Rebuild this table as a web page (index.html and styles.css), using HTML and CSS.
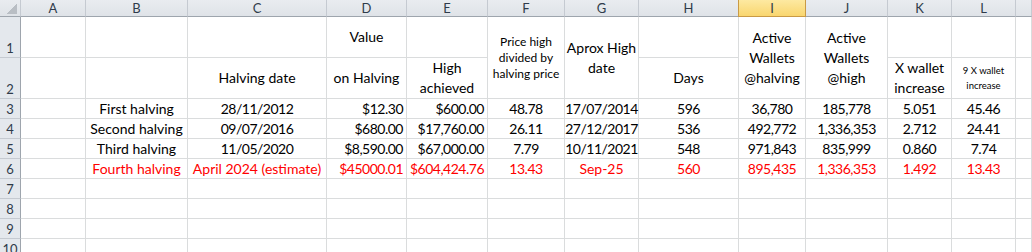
FILE: index.html
```html
<!DOCTYPE html>
<html lang="en">
<head>
<meta charset="utf-8">
<title>Bitcoin halving sheet</title>
<link rel="stylesheet" href="styles.css">
</head>
<body>
<div class="sheet">
  <div class="ch corner"></div>
  <div class="ch">A</div>
  <div class="ch">B</div>
  <div class="ch">C</div>
  <div class="ch">D</div>
  <div class="ch">E</div>
  <div class="ch">F</div>
  <div class="ch">G</div>
  <div class="ch">H</div>
  <div class="ch sel">I</div>
  <div class="ch">J</div>
  <div class="ch">K</div>
  <div class="ch">L</div>
  <div class="ch"></div>

  <div class="rh">1</div>
  <div class="c"></div>
  <div class="c"></div>
  <div class="c"></div>
  <div class="c ctr">Value</div>
  <div class="c"></div>
  <div class="c ctr span2 small">Price high<br>divided by<br>halving price</div>
  <div class="c ctr span2">Aprox High<br>date</div>
  <div class="c"></div>
  <div class="c ctr span2">Active<br>Wallets<br>@halving</div>
  <div class="c ctr span2">Active<br>Wallets<br>@high</div>
  <div class="c"></div>
  <div class="c"></div>
  <div class="c"></div>

  <div class="rh">2</div>
  <div class="c"></div>
  <div class="c"></div>
  <div class="c ctr">Halving date</div>
  <div class="c ctr">on Halving</div>
  <div class="c ctr">High<br>achieved</div>
  <div class="c ctr">Days</div>
  <div class="c ctr">X wallet<br>increase</div>
  <div class="c ctr tiny">9 X wallet<br>increase</div>
  <div class="c"></div>

  <div class="rh">3</div>
  <div class="c"></div>
  <div class="c ctr">First halving</div>
  <div class="c ctr num">28/11/2012</div>
  <div class="c rt num">$12.30</div>
  <div class="c rt num">$600.00</div>
  <div class="c ctr num">48.78</div>
  <div class="c ctr num">17/07/2014</div>
  <div class="c ctr num">596</div>
  <div class="c ctr num">36,780</div>
  <div class="c ctr num">185,778</div>
  <div class="c ctr num">5.051</div>
  <div class="c ctr num">45.46</div>
  <div class="c"></div>

  <div class="rh">4</div>
  <div class="c"></div>
  <div class="c ctr">Second halving</div>
  <div class="c ctr num">09/07/2016</div>
  <div class="c rt num">$680.00</div>
  <div class="c rt num">$17,760.00</div>
  <div class="c ctr num">26.11</div>
  <div class="c ctr num">27/12/2017</div>
  <div class="c ctr num">536</div>
  <div class="c ctr num">492,772</div>
  <div class="c ctr num">1,336,353</div>
  <div class="c ctr num">2.712</div>
  <div class="c ctr num">24.41</div>
  <div class="c"></div>

  <div class="rh">5</div>
  <div class="c"></div>
  <div class="c ctr">Third halving</div>
  <div class="c ctr num">11/05/2020</div>
  <div class="c rt num">$8,590.00</div>
  <div class="c rt num">$67,000.00</div>
  <div class="c ctr num">7.79</div>
  <div class="c ctr num">10/11/2021</div>
  <div class="c ctr num">548</div>
  <div class="c ctr num">971,843</div>
  <div class="c ctr num">835,999</div>
  <div class="c ctr num">0.860</div>
  <div class="c ctr num">7.74</div>
  <div class="c"></div>

  <div class="rh">6</div>
  <div class="c"></div>
  <div class="c ctr red">Fourth halving</div>
  <div class="c ctr red">April 2024 (estimate)</div>
  <div class="c rt red num">$45000.01</div>
  <div class="c rt red num">$604,424.76</div>
  <div class="c ctr red num">13.43</div>
  <div class="c ctr red">Sep-25</div>
  <div class="c ctr red num">560</div>
  <div class="c ctr red num">895,435</div>
  <div class="c ctr red num">1,336,353</div>
  <div class="c ctr red num">1.492</div>
  <div class="c ctr red num">13.43</div>
  <div class="c"></div>

  <div class="rh">7</div>
  <div class="c"></div><div class="c"></div><div class="c"></div><div class="c"></div><div class="c"></div><div class="c"></div><div class="c"></div><div class="c"></div><div class="c"></div><div class="c"></div><div class="c"></div><div class="c"></div><div class="c"></div>
  <div class="rh">8</div>
  <div class="c"></div><div class="c"></div><div class="c"></div><div class="c"></div><div class="c"></div><div class="c"></div><div class="c"></div><div class="c"></div><div class="c"></div><div class="c"></div><div class="c"></div><div class="c"></div><div class="c"></div>
  <div class="rh">9</div>
  <div class="c"></div><div class="c"></div><div class="c"></div><div class="c"></div><div class="c"></div><div class="c"></div><div class="c"></div><div class="c"></div><div class="c"></div><div class="c"></div><div class="c"></div><div class="c"></div><div class="c"></div>
  <div class="rh">10</div>
  <div class="c"></div><div class="c"></div><div class="c"></div><div class="c"></div><div class="c"></div><div class="c"></div><div class="c"></div><div class="c"></div><div class="c"></div><div class="c"></div><div class="c"></div><div class="c"></div><div class="c"></div>
</div>
</body>
</html>
```
FILE: styles.css
```css
html, body {
  margin: 0;
  padding: 0;
  background: #ffffff;
  overflow: hidden;
}

.sheet {
  display: grid;
  grid-template-columns: 21px 65px 102px 139px 80px 81px 77px 74px 100px 67px 82px 64px 64px 1fr;
  grid-template-rows: 17px 41px 41px repeat(8, 20px);
  width: 1032px;
  font-family: Lato, "Open Sans", sans-serif;
  font-size: 14px;
  color: #000000;
}

.sheet > div {
  box-sizing: border-box;
  border-right: 1px solid #dadcdd;
  border-bottom: 1px solid #dadcdd;
  display: flex;
  align-items: center;
  white-space: nowrap;
  overflow: visible;
}

.sheet > .ch {
  background: linear-gradient(#e9ecf0, #dfe3e8);
  border-right: 1px solid #c5cad1;
  border-bottom: 1px solid #9ea5ad;
  justify-content: center;
  font-size: 13px;
  color: #2f3b4a;
}

.sheet > .ch.sel {
  background: linear-gradient(#fde9a1, #f9d66f);
  border-left: 1px solid #c99a45;
  border-right: 1px solid #c99a45;
  border-bottom: 1px solid #c99a45;
  margin-left: -1px;
  color: #2f3b4a;
}

.sheet > .corner {
  background:
    linear-gradient(to bottom right, transparent 50%, #b9bec4 50%) 7px 4px / 10px 10px no-repeat,
    linear-gradient(#e9ecf0, #dfe3e8);
}

.sheet > .rh {
  background: #e4e8ed;
  border-right: 1px solid #9ea5ad;
  border-bottom: 1px solid #c5cad1;
  align-items: flex-end;
  justify-content: center;
  padding-bottom: 1px;
  font-size: 13px;
  color: #2f3b4a;
}

.sheet > .ctr {
  justify-content: center;
  text-align: center;
  line-height: 20px;
}

.sheet > .rt {
  justify-content: flex-end;
  padding-right: 3px;
}

.sheet > .num {
  letter-spacing: -0.5px;
}

.sheet > .span2 {
  grid-row: span 2;
}

.sheet > .small {
  font-size: 12px;
  line-height: 16px;
}

.sheet > .tiny {
  font-size: 9.5px;
  line-height: 15px;
}

.sheet > .red {
  color: #ff0000;
}
```
